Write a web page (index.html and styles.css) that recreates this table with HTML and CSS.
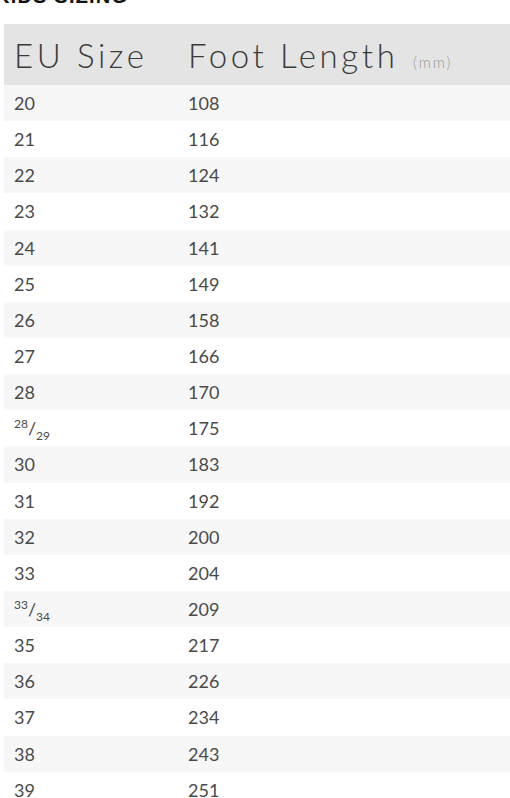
FILE: index.html
```html
<!DOCTYPE html>
<html>
<head>
<meta charset="utf-8">
<link rel="stylesheet" href="styles.css">
</head>
<body>
<h2 class="title">KIDS SIZING</h2>
<table class="sizes">
<thead>
<tr><th class="c1">EU Size</th><th class="c2">Foot Length <span class="unit">(mm)</span></th></tr>
</thead>
<tbody>
<tr><td>20</td><td>108</td></tr>
<tr><td>21</td><td>116</td></tr>
<tr><td>22</td><td>124</td></tr>
<tr><td>23</td><td>132</td></tr>
<tr><td>24</td><td>141</td></tr>
<tr><td>25</td><td>149</td></tr>
<tr><td>26</td><td>158</td></tr>
<tr><td>27</td><td>166</td></tr>
<tr><td>28</td><td>170</td></tr>
<tr><td><sup>28</sup>/<sub>29</sub></td><td>175</td></tr>
<tr><td>30</td><td>183</td></tr>
<tr><td>31</td><td>192</td></tr>
<tr><td>32</td><td>200</td></tr>
<tr><td>33</td><td>204</td></tr>
<tr><td><sup>33</sup>/<sub>34</sub></td><td>209</td></tr>
<tr><td>35</td><td>217</td></tr>
<tr><td>36</td><td>226</td></tr>
<tr><td>37</td><td>234</td></tr>
<tr><td>38</td><td>243</td></tr>
<tr><td>39</td><td>251</td></tr>
</tbody>
</table>
</body>
</html>
```
FILE: styles.css
```css
html, body {
  margin: 0;
  padding: 0;
  background: #fff;
  overflow: hidden;
}
body {
  font-family: "Lato", "Open Sans", sans-serif;
  color: #444;
}
.title {
  margin: -15px 0 0 -5px;
  height: 22px;
  font-family: "Liberation Sans", sans-serif;
  font-weight: bold;
  font-size: 20px;
  line-height: 22px;
  color: #111;
  letter-spacing: 1.2px;
}
.sizes {
  margin: 17px 0 0 4px;
  width: 506px;
  border-collapse: collapse;
}
.sizes th {
  background: #e4e4e4;
  height: 61px;
  padding: 0;
  text-align: left;
  font-weight: 300;
  font-size: 33px;
  letter-spacing: 3.6px;
  color: #3a3a3a;
  vertical-align: middle;
}
.sizes th.c1 {
  width: 174px;
  padding-left: 10px;
}
.sizes .unit {
  font-size: 15px;
  letter-spacing: 2px;
  color: #999;
  margin-left: 2px;
}
.sizes td {
  height: 36.15px;
  padding: 0;
  font-size: 18px;
  color: #4a4a4a;
  vertical-align: middle;
}
.sizes td:first-child {
  padding-left: 10px;
}
.sizes tbody tr:nth-child(odd) td {
  background: #f7f7f7;
}
.sizes sup, .sizes sub {
  font-size: 12px;
  line-height: 0;
}
```
